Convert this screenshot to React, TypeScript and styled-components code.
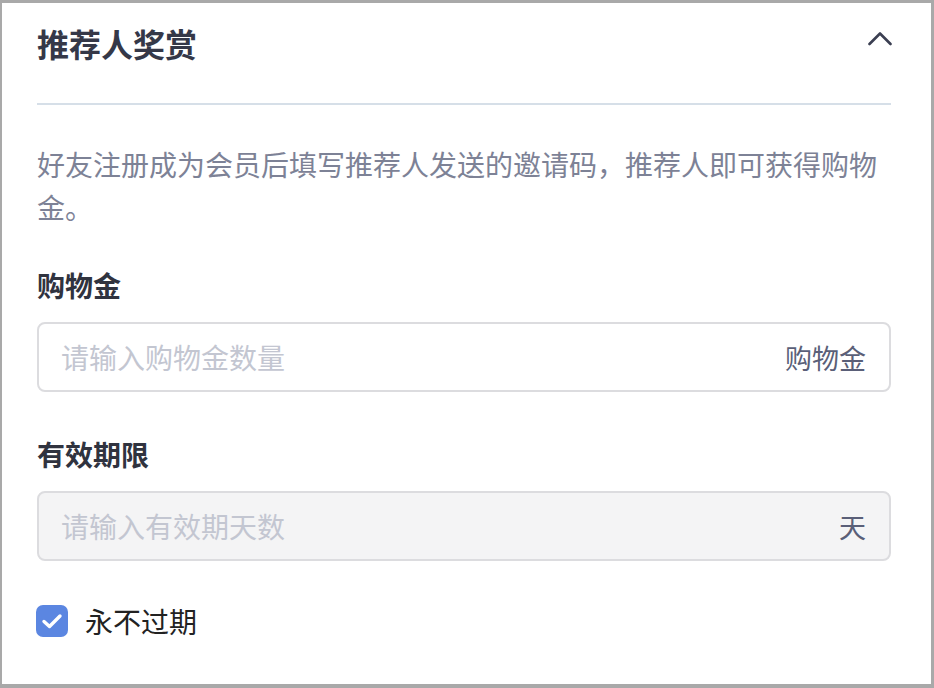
import React, { useState } from 'react'
import styled, { createGlobalStyle } from 'styled-components'

const GlobalStyle = createGlobalStyle`
  html, body {
    margin: 0;
    padding: 0;
    background: #a9a9a9;
  }
  body {
    font-family: "Noto Sans CJK SC", "Noto Sans", sans-serif;
  }
`

const Card = styled.div`
  box-sizing: border-box;
  margin: 3px 3px 4px 2px;
  height: 681px;
  background: #ffffff;
  padding: 19px 40px 0 35px;
`

const Header = styled.div`
  display: flex;
  align-items: center;
  justify-content: space-between;
  height: 42px;
  padding-bottom: 39px;
  border-bottom: 2px solid #d6dfe8;
`

const Title = styled.h2`
  margin: 0;
  font-size: 32px;
  line-height: 42px;
  font-weight: 700;
  color: #353848;
`

const Toggle = styled.button`
  display: flex;
  align-items: center;
  justify-content: center;
  width: 28px;
  height: 28px;
  margin: -8px -3px 0 0;
  padding: 0;
  border: none;
  background: transparent;
  cursor: pointer;
`

const Description = styled.p`
  margin: 38px 0 0;
  font-size: 28px;
  line-height: 43px;
  color: #7d8296;
`

const Label = styled.div<{ $gap: number }>`
  margin-top: ${({ $gap }) => $gap}px;
  font-size: 28px;
  line-height: 36px;
  font-weight: 700;
  color: #30333f;
`

const Field = styled.div<{ $disabled?: boolean }>`
  box-sizing: border-box;
  display: flex;
  align-items: center;
  height: 70px;
  margin-top: 19px;
  padding: 0 23px 0 22px;
  border: 2px solid #dcdcdf;
  border-radius: 8px;
  background: ${({ $disabled }) => ($disabled ? '#f4f4f5' : '#ffffff')};
`

const Input = styled.input`
  flex: 1;
  min-width: 0;
  border: none;
  outline: none;
  padding: 0;
  background: transparent;
  font-family: inherit;
  font-size: 28px;
  color: #30333f;
  &::placeholder {
    color: #c3c6d1;
  }
  &:disabled {
    cursor: not-allowed;
  }
`

const Suffix = styled.span`
  font-size: 27px;
  color: #5a5f78;
`

const CheckRow = styled.label`
  display: flex;
  align-items: center;
  gap: 17px;
  margin-top: 42px;
  margin-left: -1px;
  cursor: pointer;
`

const Box = styled.span<{ $checked: boolean }>`
  display: flex;
  align-items: center;
  justify-content: center;
  width: 32px;
  height: 32px;
  border-radius: 7px;
  box-sizing: border-box;
  background: ${({ $checked }) => ($checked ? '#5b86e1' : '#ffffff')};
  border: ${({ $checked }) => ($checked ? 'none' : '2px solid #dcdcdf')};
`

const CheckText = styled.span`
  font-size: 28px;
  line-height: 36px;
  color: #222222;
`

const App = () => {
  const [open, setOpen] = useState(true)
  const [forever, setForever] = useState(true)

  return (
    <>
      <GlobalStyle />
      <Card>
        <Header>
          <Title>推荐人奖赏</Title>
          <Toggle onClick={() => setOpen(!open)}>
            <svg width="24" height="14" viewBox="0 0 24 14">
              <path
                d={open ? 'M1.5 12 L12 1.5 L22.5 12' : 'M1.5 2 L12 12.5 L22.5 2'}
                fill="none"
                stroke="#3b3f52"
                strokeWidth="2.6"
                strokeLinecap="round"
                strokeLinejoin="round"
              />
            </svg>
          </Toggle>
        </Header>
        {open && (
          <>
            <Description>
              好友注册成为会员后填写推荐人发送的邀请码，推荐人即可获得购物金。
            </Description>

            <Label $gap={38}>购物金</Label>
            <Field>
              <Input placeholder="请输入购物金数量" />
              <Suffix>购物金</Suffix>
            </Field>

            <Label $gap={44}>有效期限</Label>
            <Field $disabled={forever}>
              <Input placeholder="请输入有效期天数" disabled={forever} />
              <Suffix>天</Suffix>
            </Field>

            <CheckRow onClick={() => setForever(!forever)}>
              <Box $checked={forever}>
                {forever && (
                  <svg width="22" height="18" viewBox="0 0 22 18">
                    <path
                      d="M3 9.5 L8.5 14.5 L19 4"
                      fill="none"
                      stroke="#ffffff"
                      strokeWidth="3.4"
                      strokeLinecap="round"
                      strokeLinejoin="round"
                    />
                  </svg>
                )}
              </Box>
              <CheckText>永不过期</CheckText>
            </CheckRow>
          </>
        )}
      </Card>
    </>
  )
}

export default App
